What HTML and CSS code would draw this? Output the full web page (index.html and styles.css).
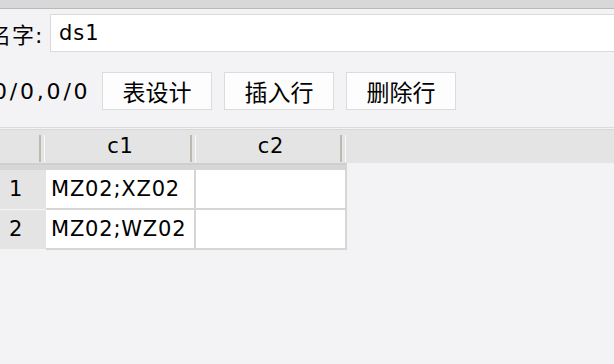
FILE: index.html
```html
<!DOCTYPE html>
<html lang="zh">

<head>
    <meta charset="UTF-8" />
    <title>ds1</title>
    <link rel="stylesheet" href="styles.css">
</head>

<body>

    <!-- Top strip -->
    <div class="topbar"></div>

    <!-- Name -->
    <div class="name-row">
        <span class="label">名字:</span>
        <input class="name-input" type="text" value="ds1">
    </div>

    <!-- Toolbar -->
    <div class="tool-row">
        <span class="counter">0/0,0/0</span>
        <button class="btn">表设计</button>
        <button class="btn">插入行</button>
        <button class="btn">删除行</button>
    </div>

    <!-- Grid -->
    <div class="grid">
        <div class="grid-head">
            <div class="hcell corner"></div>
            <div class="hcell">c1</div>
            <div class="hcell">c2</div>
        </div>
        <div class="grid-band"></div>
        <div class="grid-row">
            <div class="rownum">1</div>
            <div class="cell">MZ02;XZ02</div>
            <div class="cell"></div>
        </div>
        <div class="grid-row">
            <div class="rownum">2</div>
            <div class="cell">MZ02;WZ02</div>
            <div class="cell"></div>
        </div>
    </div>

</body>

</html>
```

FILE: styles.css
```css
* {
    box-sizing: border-box;
}

body {
    margin: 0;
    overflow: hidden;
    background: #f3f3f5;
    font-family: 'DejaVu Sans', 'Noto Sans CJK SC', sans-serif;
    font-size: 21px;
    color: #000;
}

.topbar {
    height: 9px;
    background: #d8d8d8;
    border-bottom: 1px solid #b9b9b9;
}

/* name row */
.name-row {
    display: flex;
    align-items: center;
    margin: 5px -20px 0 -11px;
}

.label {
    width: 61px;
    font-size: 22px;
    letter-spacing: 1px;
}

.name-input {
    flex: 1;
    height: 38px;
    padding: 0 8px;
    border: 1px solid #d9d9d9;
    background: #fff;
    font-family: inherit;
    font-size: 21px;
    letter-spacing: 1px;
    color: #000;
    outline: none;
}

/* toolbar */
.tool-row {
    display: flex;
    align-items: center;
    gap: 12px;
    margin: 20px 0 0 -7px;
    padding-bottom: 17px;
    border-bottom: 1px solid #dadada;
}

.counter {
    width: 97px;
    font-size: 22px;
    letter-spacing: 2.8px;
}

.btn {
    width: 110px;
    height: 38px;
    border: 1px solid #dcdcdc;
    background: #fdfdfd;
    font-family: 'Noto Sans CJK SC', sans-serif;
    font-size: 23px;
    color: #000;
    padding: 0;
}

/* grid */
.grid {
    margin-top: 1px;
}

.grid-head {
    display: grid;
    grid-template-columns: 45px 151px 150px;
    height: 34px;
    background: #e4e4e4;
    border-top: 1px solid #d8d8d8;
}

.hcell {
    position: relative;
    text-align: center;
    line-height: 33px;
    letter-spacing: 0.7px;
}

.hcell::after {
    content: '';
    position: absolute;
    right: 0;
    top: 5px;
    bottom: 1px;
    width: 3px;
    border-left: 2px solid #bdb9ae;
    border-right: 1px solid #fafafa;
}

.grid-band {
    width: 347px;
    height: 7px;
    background: #d6d6d6;
    border-top: 2px solid #cfcfcf;
}

.grid-row {
    display: grid;
    grid-template-columns: 46px 150px 151px;
    height: 40px;
}

.rownum {
    background: #e4e4e4;
    border-bottom: 1px solid #f4f4f4;
    padding-left: 9px;
    line-height: 39px;
}

.cell {
    background: #fff;
    border-right: 2px solid #d6d6d6;
    border-bottom: 2px solid #d6d6d6;
    padding-left: 5px;
    line-height: 38px;
    letter-spacing: 0.8px;
}
```
